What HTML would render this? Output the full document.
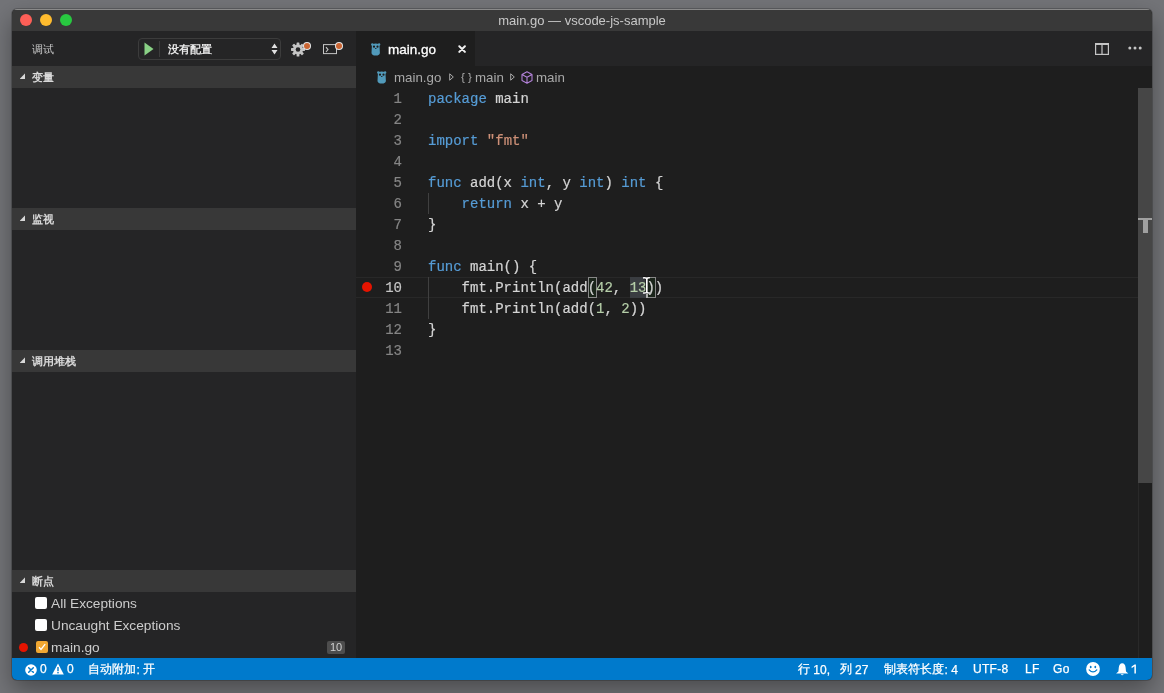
<!DOCTYPE html>
<html><head><meta charset="utf-8">
<style>
*{margin:0;padding:0;box-sizing:border-box}
html,body{width:1164px;height:693px;overflow:hidden;background:#737478;font-family:"Liberation Sans",sans-serif}
.abs{position:absolute}
svg{display:block}
#win{position:absolute;will-change:transform;left:12px;top:9px;width:1140px;height:671px;background:#1e1e1e;border-radius:5px;overflow:hidden;box-shadow:0 0 0 1px rgba(0,0,0,0.2),0 10px 24px rgba(0,0,0,0.36)}
#title{position:absolute;left:0;top:0;width:1140px;height:22px;background:#393939;border-top:1px solid #8a8a8a}
#title .t{position:absolute;left:0;width:1140px;top:3px;text-align:center;color:#c8c8c8;font-size:13px}
.light{position:absolute;top:4px;width:12px;height:12px;border-radius:50%}
#side{position:absolute;left:0;top:22px;width:344px;height:627px;background:#252526}
.sh{position:absolute;left:0;width:344px;height:22px;background:#383838;color:#d8d8d8;font-size:11px;font-weight:bold}
.sh .tri{position:absolute;left:7.6px;top:7.3px;width:5.6px;height:5.8px;background:#d8d8d8;clip-path:polygon(0 100%,100% 0,100% 100%)}
.sh span{position:absolute;left:20px;top:4px}
#editor{position:absolute;left:344px;top:22px;width:796px;height:627px;background:#1e1e1e}
#tabs{position:absolute;left:0;top:0;width:796px;height:35px;background:#252526}
#tab{position:absolute;left:0;top:0;width:119px;height:35px;background:#1e1e1e}
.code{position:absolute;font-family:"Liberation Mono",monospace;font-size:14px;line-height:21px;white-space:pre;color:#d4d4d4;-webkit-text-stroke:0.2px currentColor}
.ln{position:absolute;left:0;width:46px;white-space:pre;text-align:right;font-family:"Liberation Mono",monospace;font-size:14px;line-height:21px;color:#858585;-webkit-text-stroke:0.2px currentColor}
.k{color:#569cd6}.s{color:#ce9178}.n{color:#b5cea8}
#status{position:absolute;left:0;top:649px;width:1140px;height:22px;background:#007acc;color:#fff;font-size:12px}
#status .cj{position:relative;top:-1px}#status .i{position:absolute;top:4px;white-space:nowrap;letter-spacing:0.3px;-webkit-text-stroke:0.25px #fff}
.bp{position:absolute;left:0;width:344px;height:22px;color:#cccccc;font-size:13.7px}
.cb{position:absolute;left:23px;top:5px;width:12px;height:12px;background:#fff;border-radius:2px}
.dot{position:absolute;width:6.4px;height:6.4px;border-radius:50%;background:#cc6633;box-shadow:0 0 0 1px #e8e8e8}
</style></head><body>
<div id="win">
  <div id="title">
    <div class="light" style="left:8px;background:#fd5f57"></div>
    <div class="light" style="left:28px;background:#febb2e"></div>
    <div class="light" style="left:48px;background:#28c840"></div>
    <div class="t">main.go — vscode-js-sample</div>
  </div>
  <div id="side">
    <div class="abs" style="left:20px;top:11px;color:#cccccc;font-size:11px">调试</div>
    <div class="abs" style="left:126px;top:7px;width:143px;height:22px;border:1px solid #3c3c3c;border-radius:4px"></div>
    <svg class="abs" style="left:132px;top:11px" width="10" height="14" viewBox="0 0 10 14"><path d="M0.5 0.5 L9.5 7 L0.5 13.5Z" fill="#89d185"/></svg>
    <div class="abs" style="left:147px;top:10px;width:1px;height:16px;background:#3c3c3c"></div>
    <div class="abs" style="left:156px;top:11px;color:#e8e8e8;font-size:11px;font-weight:bold">没有配置</div>
    <svg class="abs" style="left:259px;top:12px" width="7" height="12" viewBox="0 0 7 12"><path d="M3.5 0.5 L6.5 5 L0.5 5Z M0.5 7 L6.5 7 L3.5 11.5Z" fill="#e0e0e0"/></svg>
    <svg class="abs" style="left:278.5px;top:10.5px" width="14" height="15" viewBox="-7 -7.5 14 15"><g fill="#c5c5c5"><circle r="5"/><rect x="-1.4" y="-7" width="2.8" height="14" rx="0.6"/><rect x="-1.4" y="-7" width="2.8" height="14" rx="0.6" transform="rotate(45)"/><rect x="-1.4" y="-7" width="2.8" height="14" rx="0.6" transform="rotate(90)"/><rect x="-1.4" y="-7" width="2.8" height="14" rx="0.6" transform="rotate(135)"/></g><circle r="2.3" fill="#252526"/></svg>
    <div class="dot" style="left:291.8px;top:11.7px"></div>
    <svg class="abs" style="left:310px;top:12px" width="16" height="12" viewBox="0 0 16 12"><rect x="1.5" y="1.6" width="13" height="9" fill="none" stroke="#c5c5c5" stroke-width="1"/><path d="M4 4.2 L6 6.6 L4 9" fill="none" stroke="#c5c5c5" stroke-width="1.1"/></svg>
    <div class="dot" style="left:324px;top:11.7px"></div>
    <div class="sh" style="top:35px"><div class="tri"></div><span>变量</span></div>
    <div class="sh" style="top:177px"><div class="tri"></div><span>监视</span></div>
    <div class="sh" style="top:319px"><div class="tri"></div><span>调用堆栈</span></div>
    <div class="sh" style="top:539px"><div class="tri"></div><span>断点</span></div>
    <div class="bp" style="top:561px"><div class="cb"></div><span class="abs" style="left:39px;top:3.5px">All Exceptions</span></div>
    <div class="bp" style="top:583px"><div class="cb"></div><span class="abs" style="left:39px;top:3.5px">Uncaught Exceptions</span></div>
    <div class="bp" style="top:605px"><div class="abs" style="left:7px;top:6.5px;width:9px;height:9px;border-radius:50%;background:#e51400"></div><div class="cb" style="left:24px;background:#f0a732"><svg width="12" height="12" viewBox="0 0 12 12"><path d="M3 6.3 L5 8.5 L9.2 3.2" fill="none" stroke="#fff" stroke-width="1.3"/></svg></div><span class="abs" style="left:39px;top:3.5px">main.go</span>
      <div class="abs" style="left:315px;top:5px;width:18px;height:13px;background:#4d4d4d;border-radius:2px;color:#d0d0d0;font-size:11px;text-align:center;line-height:13px">10</div></div>
  </div>
  <div id="editor">
    <div id="tabs"><div id="tab"><svg class="abs" style="left:15px;top:12px" width="10" height="13" viewBox="0 0 10 13"><g fill="#519aba"><path d="M0.9 2.6 Q0.9 0.4 4.7 0.4 Q8.5 0.4 8.5 2.6 L8.9 9.8 Q8.9 12.6 4.7 12.6 Q0.5 12.6 0.5 9.8Z"/><circle cx="1.3" cy="1.5" r="1.2"/><circle cx="8.1" cy="1.5" r="1.2"/></g><circle cx="3" cy="3.7" r="1.1" fill="#1e1e1e"/><circle cx="6.5" cy="3.7" r="1.1" fill="#1e1e1e"/><ellipse cx="4.75" cy="5.5" rx="0.8" ry="0.55" fill="#1e1e1e"/></svg><span class="abs" style="left:32px;top:11px;color:#fff;font-size:13.5px;-webkit-text-stroke:0.3px #fff">main.go</span>
      <svg class="abs" style="left:101.5px;top:13.5px" width="9" height="9" viewBox="0 0 9 9"><path d="M1.3 1.3 L6.9 6.9 M6.9 1.3 L1.3 6.9" stroke="#f0f0f0" stroke-width="2" stroke-linecap="round"/></svg></div>
      <svg class="abs" style="left:739px;top:12px" width="14" height="12" viewBox="0 0 14 12"><rect x="0.6" y="1" width="12.8" height="10.4" fill="none" stroke="#c5c5c5" stroke-width="1.2"/><rect x="0" y="0" width="14" height="2" fill="#c5c5c5"/><rect x="6.4" y="1" width="1.2" height="10.5" fill="#c5c5c5"/></svg>
      <svg class="abs" style="left:772px;top:15px" width="14" height="4" viewBox="0 0 14 4"><circle cx="1.8" cy="2" r="1.5" fill="#c5c5c5"/><circle cx="7" cy="2" r="1.5" fill="#c5c5c5"/><circle cx="12.2" cy="2" r="1.5" fill="#c5c5c5"/></svg>
    </div>
    <div id="bc" class="abs" style="left:0;top:35px;width:796px;height:22px;font-size:13.3px;color:#a9a9a9">
      <svg class="abs" style="left:20.6px;top:5.3px" width="10" height="13" viewBox="0 0 10 13"><g fill="#519aba"><path d="M0.9 2.6 Q0.9 0.4 4.7 0.4 Q8.5 0.4 8.5 2.6 L8.9 9.8 Q8.9 12.6 4.7 12.6 Q0.5 12.6 0.5 9.8Z"/><circle cx="1.3" cy="1.5" r="1.2"/><circle cx="8.1" cy="1.5" r="1.2"/></g><circle cx="3" cy="3.7" r="1.1" fill="#1e1e1e"/><circle cx="6.5" cy="3.7" r="1.1" fill="#1e1e1e"/><ellipse cx="4.75" cy="5.5" rx="0.8" ry="0.55" fill="#1e1e1e"/></svg>
      <span class="abs" style="left:38px;top:4px">main.go</span>
      <svg class="abs" style="left:93px;top:7px" width="5" height="8" viewBox="0 0 5 8"><path d="M0.7 0.8 L4.3 4 L0.7 7.2Z" fill="none" stroke="#a9a9a9" stroke-width="1"/></svg>
      <span class="abs" style="left:105px;top:5px;font-size:11.5px">{ }</span>
      <span class="abs" style="left:119px;top:4px">main</span>
      <svg class="abs" style="left:154px;top:7px" width="5" height="8" viewBox="0 0 5 8"><path d="M0.7 0.8 L4.3 4 L0.7 7.2Z" fill="none" stroke="#a9a9a9" stroke-width="1"/></svg>
      <svg class="abs" style="left:165px;top:5px" width="12" height="13" viewBox="0 0 12 13"><path d="M6 0.8 L11 3.5 L11 9.5 L6 12.2 L1 9.5 L1 3.5Z M1 3.5 L6 6.3 L11 3.5 M6 6.3 L6 12.2" fill="none" stroke="#b180d7" stroke-width="1.1" stroke-linejoin="round"/></svg>
      <span class="abs" style="left:180px;top:4px">main</span>
    </div>
    <div class="abs" style="left:0;top:246px;width:782px;height:21px;border-top:1px solid #282828;border-bottom:1px solid #282828"></div>
    <div class="abs" style="left:274px;top:246px;width:16px;height:21px;background:#3a3d41"></div>
    <div class="abs" style="left:232px;top:246px;width:9px;height:21px;border:1px solid #888;background:rgba(0,100,0,0.1)"></div>
    <div class="abs" style="left:291px;top:246px;width:9px;height:21px;border:1px solid #888;background:rgba(0,100,0,0.1)"></div>
    <div class="abs" style="left:72px;top:162px;width:1px;height:21px;background:#404040"></div>
    <div class="abs" style="left:72px;top:246px;width:1px;height:42px;background:#404040"></div>
    <div class="ln" style="top:58px">1
2
3
4
5
6
7
8
9
<span style="color:#c6c6c6">10</span>
11
12
13</div>
    <div class="code" style="left:72px;top:58px"><span class="k">package</span> main

<span class="k">import</span> <span class="s">"fmt"</span>

<span class="k">func</span> add(x <span class="k">int</span>, y <span class="k">int</span>) <span class="k">int</span> {
    <span class="k">return</span> x + y
}

<span class="k">func</span> main() {
    fmt.Println(add(<span class="n">42</span>, <span class="n">13</span>))
    fmt.Println(add(<span class="n">1</span>, <span class="n">2</span>))
}
</div>
    <div class="abs" style="left:6px;top:251px;width:10px;height:10px;border-radius:50%;background:#e51400"></div>
    <div class="abs" style="left:290px;top:246px;width:2px;height:21px;background:#aeafad"></div><svg class="abs" style="left:286px;top:245px" width="9" height="18" viewBox="0 0 9 18"><path d="M1 1.9 Q3 1.4 4.75 2.4 Q6.5 1.4 8 1.9 M4.75 2.4 L4.75 16.4 M1 16.9 Q3 17.4 4.75 16.4 Q6.5 17.4 8 16.9" fill="none" stroke="#000" stroke-width="3" stroke-opacity="0.5"/><path d="M1 1.9 Q3 1.4 4.75 2.4 Q6.5 1.4 8 1.9 M4.75 2.4 L4.75 16.4 M1 16.9 Q3 17.4 4.75 16.4 Q6.5 17.4 8 16.9" fill="none" stroke="#fff" stroke-width="1.5"/></svg>
    <div class="abs" style="left:782px;top:57px;width:1px;height:570px;background:#292929"></div><div class="abs" style="left:782px;top:57px;width:14px;height:395px;background:#464646"></div>
    <div class="abs" style="left:782px;top:187px;width:14px;height:2px;background:#a0a0a0"></div>
    <div class="abs" style="left:787px;top:189px;width:5px;height:13px;background:#a0a0a0"></div>
  </div>
  <div id="status">
    <svg class="abs" style="left:12.5px;top:5.5px" width="12" height="12" viewBox="0 0 12 12"><circle cx="6" cy="6" r="5.8" fill="#fff"/><path d="M3.7 3.7 L8.3 8.3 M8.3 3.7 L3.7 8.3" stroke="#007acc" stroke-width="1.5" stroke-linecap="round"/></svg>
    <span class="i" style="left:28px">0</span>
    <svg class="abs" style="left:40px;top:5px" width="12" height="12" viewBox="0 0 12 12"><path d="M6 0.5 L11.8 11.5 L0.2 11.5Z" fill="#fff"/><rect x="5.3" y="4" width="1.4" height="4.2" fill="#007acc"/><rect x="5.3" y="9" width="1.4" height="1.4" fill="#007acc"/></svg>
    <span class="i" style="left:55px">0</span>
    <span class="i" style="left:76px;letter-spacing:0.1px"><span class="cj">自动附加</span>: <span class="cj">开</span></span>
    <span class="i" style="left:786px;letter-spacing:0"><span class="cj">行</span> 10<span style="display:inline-block;width:13px">,</span><span class="cj">列</span> 27</span>
    <span class="i" style="left:872px;letter-spacing:0.1px"><span class="cj">制表符长度</span>: 4</span>
    <span class="i" style="left:961px">UTF-8</span>
    <span class="i" style="left:1013px">LF</span>
    <span class="i" style="left:1041px">Go</span>
    <svg class="abs" style="left:1074px;top:4px" width="14" height="14" viewBox="0 0 14 14"><circle cx="7" cy="7" r="6.9" fill="#fff"/><ellipse cx="4.7" cy="5" rx="0.9" ry="1.3" fill="#007acc"/><ellipse cx="9.3" cy="5" rx="0.9" ry="1.3" fill="#007acc"/><path d="M3.2 7.9 Q7 12 10.8 7.9" fill="none" stroke="#007acc" stroke-width="1.3" stroke-linecap="round"/></svg>
    <svg class="abs" style="left:1103.7px;top:4.6px" width="13" height="13" viewBox="0 0 13 13"><path d="M6.2 0.2 Q9.2 0.4 9.6 4.6 L10 8.6 L12.3 10.5 L0.1 10.5 L2.4 8.6 L2.8 4.6 Q3.2 0.4 6.2 0.2Z" fill="#fff"/><path d="M4.6 11.2 L7.8 11.2 Q6.2 13.2 4.6 11.2Z" fill="#fff"/></svg>
    <svg class="abs" style="left:1118.5px;top:6px" width="6" height="10" viewBox="0 0 6 10"><path d="M0.6 2.6 L3.6 0.4 L4.9 0.4 L4.9 9.6 L3.4 9.6 L3.4 2.3 L0.6 4.2Z" fill="#fff"/></svg>
  </div>
</div>
</body></html>
